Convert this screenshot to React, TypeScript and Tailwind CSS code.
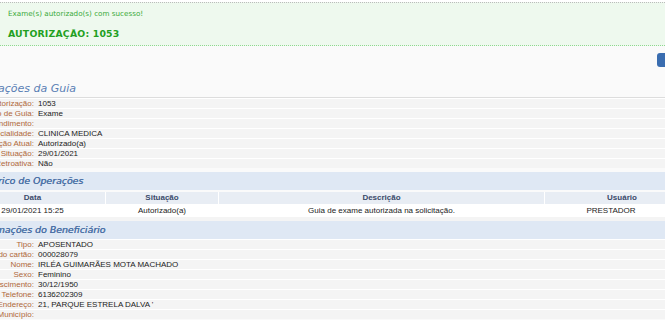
import React from "react";

const F = { fontFamily: '"Liberation Sans", Arial, sans-serif' };
const V = { fontFamily: '"DejaVu Sans", Verdana, sans-serif' };

function Row({ label, value }: { label: string; value?: string }) {
  return (
    <div className="flex h-[10px] items-center border-t border-white bg-[#f4f4f4] text-[8px] leading-none" style={F}>
      <div className="flex w-[74px] shrink-0 justify-end whitespace-nowrap text-[#b0683a]">{label}:</div>
      <div className="whitespace-nowrap pl-[4px] text-[#222]">{value}</div>
    </div>
  );
}

function SectionHeader({ title, shift }: { title: string; shift: string }) {
  return (
    <div className="flex h-[18px] items-center bg-[#dfe8f4]">
      <span className={`whitespace-nowrap italic text-[9.4px] text-[#4a70a6] [text-shadow:0.3px_0_0_#4a70a6] ${shift}`} style={V}>
        {title}
      </span>
    </div>
  );
}

export default function App() {
  const guia: [string, string?][] = [
    ["Autorização", "1053"],
    ["Tipo de Guia", "Exame"],
    ["Atendimento"],
    ["Especialidade", "CLINICA MEDICA"],
    ["Situação Atual", "Autorizado(a)"],
    ["Data da Situação", "29/01/2021"],
    ["Retroativa", "Não"],
  ];
  const benef: [string, string?][] = [
    ["Tipo", "APOSENTADO"],
    ["Número do cartão", "000028079"],
    ["Nome", "IRLÉA GUIMARÃES MOTA MACHADO"],
    ["Sexo", "Feminino"],
    ["Data de Nascimento", "30/12/1950"],
    ["Telefone", "6136202309"],
    ["Endereço", "21, PARQUE ESTRELA DALVA '"],
    ["Município"],
  ];
  return (
    <div className="h-[320px] w-[665px] overflow-hidden bg-[#fafafa]">
      <div className="h-[2px] bg-white" />
      <div className="h-[44px] border-t border-dotted border-[#bbb] border-b border-b-dashed border-b-[#8fd88f] bg-[#eef9ee] pl-[8px]" style={V}>
        <div className="pt-[6px] text-[7.2px] leading-[10px] text-[#3aaa3a]">Exame(s) autorizado(s) com sucesso!</div>
        <div className="pt-[9px] text-[9.3px] font-bold leading-[12px] text-[#22a022] tracking-[0.2px]">AUTORIZAÇÃO: 1053</div>
      </div>
      <div className="-ml-[40px] w-[745px]">
        <div className="relative h-[52px] border-b border-[#ddd]">
          <div className="absolute left-[697px] top-[7px] h-[14px] w-[30px] rounded-[3px] bg-[#3a6db0]" />
          <div className="pt-[28px] pl-[2px]">
            <span className="whitespace-nowrap italic text-[11px] leading-[14px] text-[#5a7fb5]" style={V}>Informações da Guia</span>
          </div>
        </div>
        {guia.map(([l, v]) => (
          <Row key={l} label={l} value={v} />
        ))}
        <div className="h-[4px]" />
        <SectionHeader title="Histórico de Operações" shift="pl-[14px]" />
        <div className="mt-[2px] grid h-[12px] grid-cols-[145px_112px_325px_1fr] gap-x-[1px] bg-white text-[8px] font-bold leading-none text-[#3a4a6a]" style={F}>
          <div className="flex items-center justify-center bg-[#e8edf4]">Data</div>
          <div className="flex items-center justify-center bg-[#e8edf4]">Situação</div>
          <div className="flex items-center justify-center bg-[#e8edf4]">Descrição</div>
          <div className="flex items-center justify-center bg-[#e8edf4] pr-[6px]">Usuário</div>
        </div>
        <div className="grid h-[13px] grid-cols-[145px_112px_325px_1fr] gap-x-[1px] bg-white text-[8px] leading-none text-[#222]" style={F}>
          <div className="flex items-center justify-center">29/01/2021 15:25</div>
          <div className="flex items-center justify-center">Autorizado(a)</div>
          <div className="flex items-center justify-center">Guia de exame autorizada na solicitação.</div>
          <div className="flex items-center justify-center pr-[28px]">PRESTADOR</div>
        </div>
        <div className="h-[4px] bg-[#f4f4f4]" />
        <SectionHeader title="Informações do Beneficiário" shift="pl-[14px]" />
        {benef.map(([l, v]) => (
          <Row key={l} label={l} value={v} />
        ))}
      </div>
    </div>
  );
}
